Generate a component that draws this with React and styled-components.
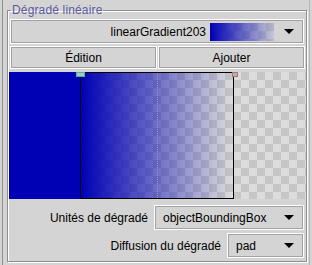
import React from "react";
import styled, { createGlobalStyle } from "styled-components";

const GlobalStyle = createGlobalStyle`
  html, body {
    margin: 0;
    padding: 0;
    background: #d4d4d4;
    font-family: "Liberation Sans", Arial, sans-serif;
    font-size: 12px;
    color: #000;
  }
`;

const checker = `
  background-color: #dcdcdc;
  background-image: conic-gradient(#c6c6c6 25%, transparent 25% 50%, #c6c6c6 50% 75%, transparent 75%);
  background-size: 16px 16px;
`;

const Panel = styled.div`
  box-sizing: border-box;
  width: 308px;
  height: 265px;
  margin-left: 2px;
  border-left: 1px solid #909090;
  border-right: 1px solid #b8b8b8;
  padding: 3px 2px 0 4px;
`;

const Frame = styled.fieldset`
  box-sizing: border-box;
  margin: 0;
  width: 300px;
  height: 259px;
  padding: 2px 2px 3px 2px;
  border: 1px solid #8e8e8e;
  box-shadow: inset 1px 1px 0 #fff, 1px 1px 0 #fff;
  display: flex;
  flex-direction: column;
`;

const Legend = styled.legend`
  margin-left: 1px;
  padding: 0 1px;
  line-height: 14px;
  color: #5a5aa0;
  font-size: 12px;
  letter-spacing: 0.15px;
`;

const Box = styled.div`
  box-sizing: border-box;
  border: 1px solid #fff;
  box-shadow: inset 0 0 0 1px #a2a2a2;
  display: flex;
  align-items: center;
`;

const Combo = styled(Box)`
  height: 25px;
  width: ${(p) => p.$width || "auto"};
  padding: 0 9px 0 8px;
  justify-content: ${(p) => (p.$right ? "flex-end" : "space-between")};
  gap: 4px;
`;

const Arrow = styled.span`
  width: 0;
  height: 0;
  border-left: 5px solid transparent;
  border-right: 5px solid transparent;
  border-top: 5px solid #000;
  margin-left: 6px;
  flex: none;
`;

const Swatch = styled.div`
  width: 64px;
  height: 18px;
  ${checker}
  background-color: #d8d8d8;
  background-size: 16px 16px;
  position: relative;
  flex: none;
  &::after {
    content: "";
    position: absolute;
    inset: 0;
    background: linear-gradient(to right, rgba(0, 0, 181, 1), rgba(0, 0, 181, 0.08));
  }
`;

const Buttons = styled.div`
  display: grid;
  grid-template-columns: 1fr 1fr;
  gap: 1px;
  margin: 2px -1px 0 0;
`;

const Button = styled(Box)`
  height: 23px;
  justify-content: center;
`;

const Preview = styled.div`
  margin: 3px -2px 0 -1px;
  height: 127px;
  display: flex;
  ${checker}
  background-size: 16px 16px;
`;

const PadFill = styled.div`
  width: ${(p) => p.$w}px;
  background: #0000b5;
  flex: none;
`;

const GradRect = styled.div`
  box-sizing: border-box;
  width: 154px;
  flex: none;
  position: relative;
  border: 1px solid #000;
  background: linear-gradient(to right, rgba(0, 0, 181, 1), rgba(0, 0, 181, 0));
`;

const MidLine = styled.div`
  position: absolute;
  top: 0;
  bottom: 0;
  left: 76px;
  border-left: 1px dotted #9a9ab8;
`;

const Stop = styled.div`
  position: absolute;
  top: -1px;
  left: ${(p) => p.$x}px;
  width: ${(p) => p.$w}px;
  height: 5px;
  box-sizing: border-box;
  border: 1px solid ${(p) => p.$edge};
  background: ${(p) => p.$fill};
`;

const Row = styled.div`
  display: flex;
  justify-content: flex-end;
  align-items: center;
  gap: 6px;
  margin-top: ${(p) => p.$top}px;
`;

const Label = styled.span`
  white-space: nowrap;
`;

export default function App() {
  return (
    <>
      <GlobalStyle />
      <Panel>
        <Frame>
          <Legend>Dégradé linéaire</Legend>
          <Combo $right>
            <span>linearGradient203</span>
            <Swatch />
            <Arrow />
          </Combo>
          <Buttons>
            <Button>Édition</Button>
            <Button>Ajouter</Button>
          </Buttons>
          <Preview>
            <PadFill $w={71} />
            <GradRect>
              <MidLine />
              <Stop $x={-5} $w={9} $edge="#5fa89c" $fill="#9ccfc4" />
              <Stop $x={151} $w={6} $edge="#9a7b7b" $fill="#c9a9a9" />
            </GradRect>
          </Preview>
          <Row $top={6}>
            <Label>Unités de dégradé</Label>
            <Combo $width="150px">
              <span>objectBoundingBox</span>
              <Arrow />
            </Combo>
          </Row>
          <Row $top={3}>
            <Label>Diffusion du dégradé</Label>
            <Combo $width="77px">
              <span>pad</span>
              <Arrow />
            </Combo>
          </Row>
        </Frame>
      </Panel>
    </>
  );
}
